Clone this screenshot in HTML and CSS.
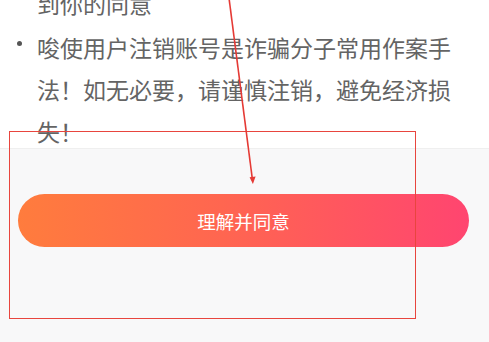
FILE: index.html
```html
<!DOCTYPE html>
<html lang="zh-CN">
<head>
<meta charset="utf-8">
<link rel="stylesheet" href="styles.css">
</head>
<body>
<div class="page">
  <section class="notice">
    <ul class="notice-list">
      <li class="item"><span class="dot dot-hidden"></span><span class="text">到你的同意</span></li>
      <li class="item item-next"><span class="dot"></span><span class="text">唆使用户注销账号是诈骗分子常用作案手法！如无必要，请谨慎注销，避免经济损失！</span></li>
    </ul>
  </section>
  <section class="footer">
    <button class="agree-btn">理解并同意</button>
  </section>
  <div class="mark-box"></div>
  <svg class="mark-arrow" width="489" height="342" viewBox="0 0 489 342">
    <line x1="229" y1="-2" x2="252.6" y2="181" stroke="#e53a35" stroke-width="1.6"/>
    <polygon points="252.9,184 249.6,177.2 255.6,176.6" fill="#e53a35"/>
  </svg>
</div>
</body>
</html>
```
FILE: styles.css
```css
html, body {
  margin: 0;
  padding: 0;
  background: #f8f8f9;
}
.page {
  position: relative;
  width: 489px;
  height: 342px;
  overflow: hidden;
  font-family: "Noto Sans CJK SC", "Noto Sans", sans-serif;
}
.notice {
  background: #ffffff;
  height: 149px;
  overflow: hidden;
  border-bottom: 1px solid #efefef;
  box-sizing: border-box;
}
.notice-list {
  list-style: none;
  margin: -18px 0 0 0;
  padding: 0 30px 0 17px;
}
.item {
  display: flex;
  align-items: flex-start;
  font-size: 23px;
  line-height: 42px;
  color: #646464;
}
.item-next {
  margin-top: 2px;
}
.dot {
  flex: 0 0 5px;
  width: 5px;
  height: 5px;
  border-radius: 50%;
  background: #555;
  margin: 15px 15px 0 0;
}
.dot-hidden {
  visibility: hidden;
}
.text {
  flex: 1;
}
.footer {
  padding: 45px 20px 0 18px;
}
.agree-btn {
  display: block;
  width: 100%;
  height: 53px;
  border: none;
  border-radius: 27px;
  background: linear-gradient(90deg, #ff7c3d 0%, #ff6650 45%, #ff4570 100%);
  color: #fff;
  font-family: "Noto Sans CJK SC", "Noto Sans", sans-serif;
  font-size: 18.5px;
  padding: 0;
  cursor: pointer;
}
.mark-box {
  position: absolute;
  left: 9px;
  top: 131px;
  width: 407px;
  height: 188px;
  border: 1.5px solid #e8453e;
  box-sizing: border-box;
}
.mark-arrow {
  position: absolute;
  left: 0;
  top: 0;
}
```
